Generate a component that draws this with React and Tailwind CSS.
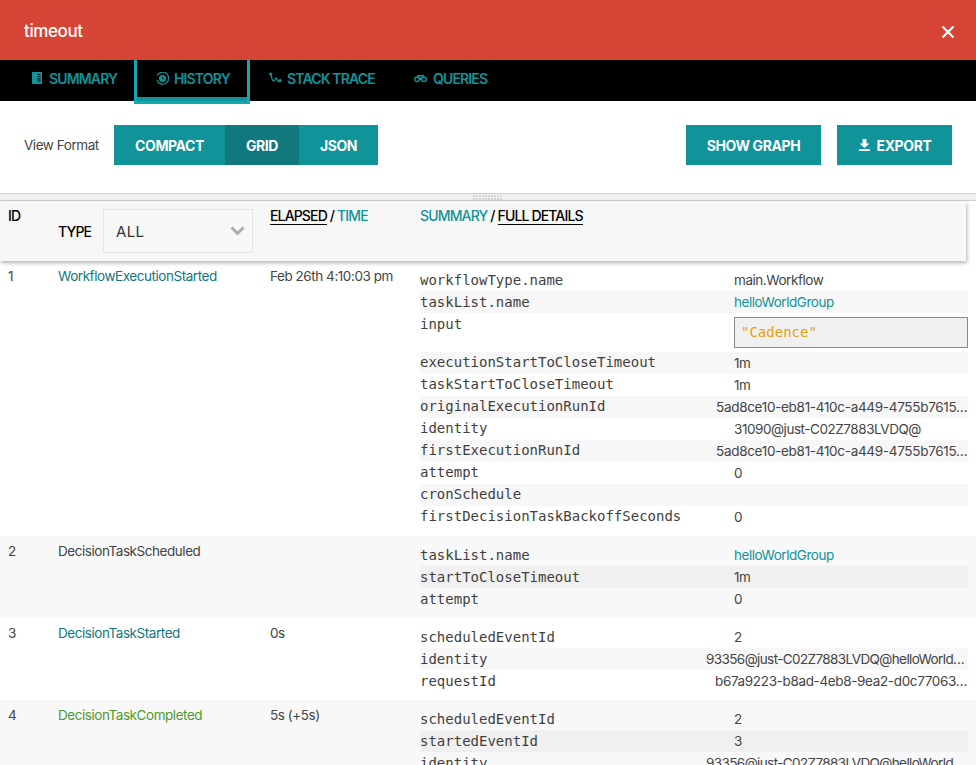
const sans = "font-['Inter','Lato',sans-serif]"

const SummaryIcon = () => (
  <svg width="10" height="12" viewBox="0 0 10 12" className="shrink-0">
    <path fill="#11939a" fillRule="evenodd" d="M0 0h10v12H0zM5.5 2v1H8.5V2zM5.5 4.2v1H8.5V4.2zM5.5 6.4v1H8.5V6.4zM5.5 8.6v1H8.5V8.6z" />
  </svg>
)

const HistoryIcon = () => (
  <svg width="13" height="13" viewBox="0 0 13 13" className="shrink-0">
    <path fill="none" stroke="#11939a" strokeWidth="1.2" d="M1.2 3.6A6 6 0 1 1 .9 8" />
    <circle cx="6.5" cy="6.5" r="3.6" fill="#11939a" />
    <path stroke="#000" strokeWidth="0.8" fill="none" d="M6.5 4.5v2.2h1.6" />
  </svg>
)

const StackIcon = () => (
  <svg width="13" height="12" viewBox="0 0 13 12" className="shrink-0">
    <circle cx="1.8" cy="2" r="1.6" fill="#11939a" />
    <circle cx="11.2" cy="8.6" r="1.6" fill="#11939a" />
    <path fill="none" stroke="#11939a" strokeWidth="1.3" d="M2 2.500c.6 2 .8 6.500 2.600 6.500s1.400-3 2.600-3 1.200 3.500 2.500 3.500c.6 0 1-.5 1.300-.9" />
  </svg>
)

const QueriesIcon = () => (
  <svg width="13" height="9" viewBox="0 0 13 9" className="shrink-0">
    <path fill="none" stroke="#11939a" strokeWidth="1.6" d="M3 1.800h7" />
    <circle cx="3" cy="5.200" r="2.300" fill="none" stroke="#11939a" strokeWidth="1.500" />
    <circle cx="10" cy="5.200" r="2.300" fill="none" stroke="#11939a" strokeWidth="1.500" />
    <path fill="#11939a" d="M5 3.500h3v2.500H5z" />
  </svg>
)

const ExportIcon = () => (
  <svg width="11" height="12" viewBox="0 0 11 12" className="shrink-0">
    <path fill="#fff" d="M3.500 0h4v4.500h3L5.500 9 .5 4.500h3zM0 10.200h11V12H0z" />
  </svg>
)

const tabs = [
  { label: 'SUMMARY', icon: <SummaryIcon />, width: 'w-[134px] pl-[32px]', gap: 'gap-[7px]' },
  { label: 'HISTORY', icon: <HistoryIcon />, width: 'w-[116px] pl-[19px]', gap: 'gap-[5px]', active: true },
  { label: 'STACK TRACE', icon: <StackIcon />, width: 'w-[147px] pl-[19px]', gap: 'gap-[5px]' },
  { label: 'QUERIES', icon: <QueriesIcon />, width: 'w-[120px] pl-[17px]', gap: 'gap-[6px]' },
]

const Tab = ({ label, icon, width, gap, active }) => (
  <div
    className={`relative flex items-center ${gap} ${width} text-[14px] font-semibold tracking-[-0.85px] text-[#11939a] ${
      active ? 'h-[44px] self-start border-x-[3px] border-b-[3px] border-[#14a9b0] pb-[5px]' : 'h-[36px]'
    }`}
  >
    {icon}
    <span>{label}</span>
    {active && <span className="absolute inset-x-0 bottom-0 h-[4px] bg-[#11939a]" />}
  </div>
)

const Button = ({ className = '', children }) => (
  <div className={`flex h-[40px] items-center justify-center text-[14px] font-bold tracking-[-0.4px] text-white ${className}`}>
    {children}
  </div>
)

const Detail = ({ name, value, pad = 'pl-[28px]', track = 'tracking-[-0.45px]', teal, box, shade, tall, up }) => (
  <div className={`flex ${tall ? 'h-[39px]' : 'h-[22px]'} items-start ${shade}`}>
    <div className={`h-[22px] w-[286px] shrink-0 font-['DejaVu_Sans_Mono',monospace] text-[14px] tracking-normal text-[#3f3f3f] ${up ? 'leading-[20px]' : 'leading-[22px]'}`}>
      {name}
    </div>
    {box ? (
      <div className="mt-[4px] ml-[28px] h-[31px] w-[234px] border border-[#8a8a8a] bg-[#f0f0f0] pl-[6px] font-['DejaVu_Sans_Mono',monospace] text-[14px] leading-[29px] tracking-normal text-[#e69f0c]">
        {value}
      </div>
    ) : (
      <div className={`w-[262px] truncate text-[13.5px] leading-[22px] ${track} ${pad} ${teal ? 'text-[#11939a]' : 'text-[#444]'}`}>
        {value}
      </div>
    )}
  </div>
)

const Row = ({ id, type, typeColor = 'text-[#444]', time, shaded, shade = 'bg-[#f7f7f7]', details }) => (
  <div className={`flex py-[8px] text-[13.5px] tracking-[-0.45px] text-[#444] ${shaded ? 'bg-[#f8f8f8]' : 'bg-white'}`}>
    <div className="w-[58px] pl-[8px] leading-[14px]">{id}</div>
    <div className={`w-[212px] leading-[14px] ${typeColor}`}>{type}</div>
    <div className="w-[150px] leading-[14px]">{time}</div>
    <div className="w-[548px]">
      {details.map((d, i) => (
        <Detail key={d.name} {...d} shade={i % 2 === 1 ? shade : ''} />
      ))}
    </div>
  </div>
)

const H = ({ on, children }) => (
  <span className={on ? 'text-[#11939a]' : 'border-b border-black text-black'}>{children}</span>
)

export default function App() {
  return (
    <div className={`h-[765px] w-[976px] overflow-hidden bg-white ${sans}`}>
      <div className="flex h-[60px] items-center justify-between bg-[#d64436] pt-[3px] pr-[21px] pl-[24px] text-[17px] font-medium tracking-[-0.4px] text-white">
        <span>timeout</span>
        <svg width="14" height="14" viewBox="0 0 14 14">
          <path stroke="#fff" strokeWidth="2.200" d="M1.500 1.500l11 11M12.500 1.500l-11 11" />
        </svg>
      </div>

      <div className="relative z-10 flex h-[41px] bg-black">
        {tabs.map((t) => (
          <Tab key={t.label} {...t} />
        ))}
      </div>

      <div className="flex h-[92px] items-start pt-[24px] pr-[24px] pl-[24px]">
        <div className="w-[90px] text-[13.5px] leading-[40px] tracking-[-0.45px] text-[#444]">View Format</div>
        <div className="flex">
          <Button className="w-[111px] bg-[#11939a]">COMPACT</Button>
          <Button className="w-[74px] bg-[#11787e]">GRID</Button>
          <Button className="w-[79px] bg-[#11939a]">JSON</Button>
        </div>
        <Button className="ml-auto w-[135px] bg-[#11939a]">SHOW GRAPH</Button>
        <Button className="ml-[16px] w-[115px] gap-[7px] bg-[#11939a] pl-[1px]">
          <ExportIcon />
          EXPORT
        </Button>
      </div>

      <div className="flex h-[8px] items-center justify-center border-y border-[#cfcfcf] bg-[#f0f0f0]">
        <svg width="30" height="5" viewBox="0 0 30 5">
          <pattern id="grip" width="3" height="3" patternUnits="userSpaceOnUse">
            <rect width="2" height="2" fill="#d6d6d6" />
          </pattern>
          <rect width="30" height="5" fill="url(#grip)" />
        </svg>
      </div>

      <div className="relative z-10 flex h-[60px] w-[966px] bg-[#f7f7f7] text-[14px] font-medium tracking-[-0.85px] text-black shadow-[1px_2px_4px_rgba(0,0,0,0.3)]">
        <div className="w-[58px] pt-[4px] pl-[8px]">ID</div>
        <div className="flex w-[212px] items-start">
          <span className="w-[45px] pt-[20px]">TYPE</span>
          <div className="mt-[8px] flex h-[44px] w-[150px] items-center justify-between border border-[#e4e4e4] bg-[#f8f8f8] pr-[7px] pl-[12px] text-[#333]">
            <span className="pt-[3px] text-[15px] font-normal tracking-[0.3px]">ALL</span>
            <svg width="15" height="10" viewBox="0 0 15 10">
              <path fill="none" stroke="#adadad" strokeWidth="3" d="M1.500 1.500l6 6 6-6" />
            </svg>
          </div>
        </div>
        <div className="w-[150px] pt-[4px]">
          <H>ELAPSED</H> <span>/</span> <H on>TIME</H>
        </div>
        <div className="pt-[4px]">
          <H on>SUMMARY</H> <span>/</span> <H>FULL DETAILS</H>
        </div>
      </div>

      <Row
        id="1"
        type="WorkflowExecutionStarted"
        typeColor="text-[#11787e]"
        time="Feb 26th 4:10:03 pm"
        details={[
          { name: 'workflowType.name', value: 'main.Workflow' },
          { name: 'taskList.name', value: 'helloWorldGroup', teal: true },
          { name: 'input', value: '"Cadence"', box: true, tall: true },
          { name: 'executionStartToCloseTimeout', value: '1m', up: true },
          { name: 'taskStartToCloseTimeout', value: '1m', up: true },
          { name: 'originalExecutionRunId', value: '5ad8ce10-eb81-410c-a449-4755b7615…', pad: 'pl-[10px]', track: 'tracking-[-0.3px]', up: true },
          { name: 'identity', value: '31090@just-C02Z7883LVDQ@', up: true },
          { name: 'firstExecutionRunId', value: '5ad8ce10-eb81-410c-a449-4755b7615…', pad: 'pl-[10px]', track: 'tracking-[-0.3px]', up: true },
          { name: 'attempt', value: '0', up: true },
          { name: 'cronSchedule', value: '', up: true },
          { name: 'firstDecisionTaskBackoffSeconds', value: '0', up: true },
        ]}
      />
      <Row
        id="2"
        type="DecisionTaskScheduled"
        shaded
        shade="bg-[#f0f0f0]"
        details={[
          { name: 'taskList.name', value: 'helloWorldGroup', teal: true },
          { name: 'startToCloseTimeout', value: '1m' },
          { name: 'attempt', value: '0' },
        ]}
      />
      <Row
        id="3"
        type="DecisionTaskStarted"
        typeColor="text-[#11787e]"
        time="0s"
        details={[
          { name: 'scheduledEventId', value: '2' },
          { name: 'identity', value: '93356@just-C02Z7883LVDQ@helloWorld…', pad: 'pl-0', track: 'tracking-[-0.6px]' },
          { name: 'requestId', value: 'b67a9223-b8ad-4eb8-9ea2-d0c77063…', pad: 'pl-[9px]', track: 'tracking-[-0.35px]' },
        ]}
      />
      <Row
        id="4"
        type="DecisionTaskCompleted"
        typeColor="text-[#4f9a2f]"
        time="5s (+5s)"
        shaded
        shade="bg-[#f0f0f0]"
        details={[
          { name: 'scheduledEventId', value: '2' },
          { name: 'startedEventId', value: '3' },
          { name: 'identity', value: '93356@just-C02Z7883LVDQ@helloWorld…', pad: 'pl-0', track: 'tracking-[-0.6px]' },
        ]}
      />
    </div>
  )
}
